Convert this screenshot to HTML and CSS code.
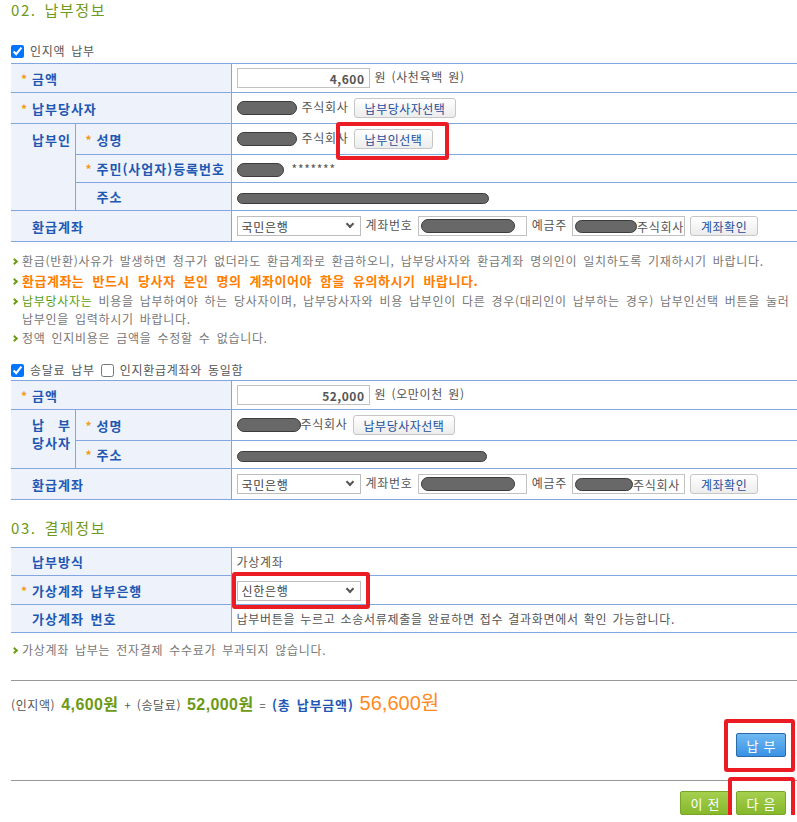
FILE: index.html
```html
<!DOCTYPE html>
<html lang="ko">
<head>
    <meta charset="UTF-8">
    <title>납부정보</title>
    <link rel="stylesheet" href="styles.css">
</head>
<body>
<div class="page">
    <h2 class="sec-title">02. 납부정보</h2>

    <div class="check-line">
        <label><input type="checkbox" checked> 인지액 납부</label>
    </div>

    <table class="form-table">
        <colgroup><col class="c-group"><col class="c-sub"><col></colgroup>
        <tr>
            <th colspan="2"><span class="req">금액</span></th>
            <td><input class="amount" type="text" value="4,600" readonly> 원 (사천육백 원)</td>
        </tr>
        <tr class="tall">
            <th colspan="2"><span class="req">납부당사자</span></th>
            <td><span class="mask w58"></span> 주식회사 <button class="btn-sm">납부당사자선택</button></td>
        </tr>
        <tr class="tall">
            <th rowspan="3" class="group">납부인</th>
            <th class="sub"><span class="req">성명</span></th>
            <td><span class="mask w58"></span> 주식회사 <span class="mark mark-btn"><button class="btn-sm">납부인선택</button></span></td>
        </tr>
        <tr class="short">
            <th class="sub"><span class="req">주민(사업자)등록번호</span></th>
            <td><span class="mask w45"></span> <span class="stars">*******</span></td>
        </tr>
        <tr class="short">
            <th class="sub"><span class="plain">주소</span></th>
            <td><span class="mask thin w250"></span></td>
        </tr>
        <tr class="tall">
            <th colspan="2"><span class="plain">환급계좌</span></th>
            <td>
                <span class="sel"><select><option>국민은행</option></select></span>
                계좌번호 <span class="field w109"><span class="mask w92"></span></span>
                예금주 <span class="field w113"><span class="mask w68 flat"></span>주식회사</span>
                <button class="btn-sm">계좌확인</button>
            </td>
        </tr>
    </table>

    <ul class="notes">
        <li>환급(반환)사유가 발생하면 청구가 없더라도 환급계좌로 환급하오니, 납부당사자와 환급계좌 명의인이 일치하도록 기재하시기 바랍니다.</li>
        <li class="warn">환급계좌는 반드시 당사자 본인 명의 계좌이어야 함을 유의하시기 바랍니다.</li>
        <li><span><b class="hl-green">납부당사자는</b> 비용을 납부하여야 하는 당사자이며, 납부당사자와 비용 납부인이 다른 경우(대리인이 납부하는 경우) 납부인선택 버튼을 눌러<br>납부인을 입력하시기 바랍니다.</span></li>
        <li>정액 인지비용은 금액을 수정할 수 없습니다.</li>
    </ul>

    <div class="check-line second">
        <label><input type="checkbox" checked> 송달료 납부</label>
        <label><input type="checkbox"> 인지환급계좌와 동일함</label>
    </div>

    <table class="form-table">
        <colgroup><col class="c-group"><col class="c-sub"><col></colgroup>
        <tr>
            <th colspan="2"><span class="req">금액</span></th>
            <td><input class="amount" type="text" value="52,000" readonly> 원 (오만이천 원)</td>
        </tr>
        <tr class="tall">
            <th rowspan="2" class="group"><div class="spread">납 부<br>당사자</div></th>
            <th class="sub"><span class="req">성명</span></th>
            <td><span class="mask w62"></span>주식회사 <button class="btn-sm">납부당사자선택</button></td>
        </tr>
        <tr class="short">
            <th class="sub"><span class="req">주소</span></th>
            <td><span class="mask thin w248"></span></td>
        </tr>
        <tr class="tall">
            <th colspan="2"><span class="plain">환급계좌</span></th>
            <td>
                <span class="sel"><select><option>국민은행</option></select></span>
                계좌번호 <span class="field w109"><span class="mask w92"></span></span>
                예금주 <span class="field w113"><span class="mask w56 flat"></span> 주식회사</span>
                <button class="btn-sm">계좌확인</button>
            </td>
        </tr>
    </table>

    <h2 class="sec-title third">03. 결제정보</h2>

    <table class="form-table">
        <colgroup><col class="c-group"><col class="c-sub"><col></colgroup>
        <tr class="short">
            <th colspan="2"><span class="plain">납부방식</span></th>
            <td>가상계좌</td>
        </tr>
        <tr>
            <th colspan="2"><span class="req">가상계좌 납부은행</span></th>
            <td><span class="mark mark-sel"><span class="sel"><select><option>신한은행</option></select></span></span></td>
        </tr>
        <tr class="short">
            <th colspan="2"><span class="plain">가상계좌 번호</span></th>
            <td>납부버튼을 누르고 소송서류제출을 완료하면 접수 결과화면에서 확인 가능합니다.</td>
        </tr>
    </table>

    <ul class="notes single">
        <li>가상계좌 납부는 전자결제 수수료가 부과되지 않습니다.</li>
    </ul>

    <div class="total">
        <span class="t-label">(인지액)</span>
        <b class="t-num">4,600원</b>
        <span class="t-op">+</span>
        <span class="t-label">(송달료)</span>
        <b class="t-num">52,000원</b>
        <span class="t-op">=</span>
        <b class="t-sum-label">(총 납부금액)</b>
        <span class="t-sum">56,600원</span>
    </div>

    <div class="pay-row">
        <span class="mark mark-pay"><button class="btn-big blue">납부</button></span>
    </div>

    <div class="nav-row">
        <button class="btn-big green">이전</button>
        <span class="mark mark-next"><button class="btn-big green">다음</button></span>
    </div>
</div>
</body>
</html>
```

FILE: styles.css
```css
body {
    margin: 0;
    background-color: #fff;
    font-family: "Noto Sans CJK KR", "Noto Sans", sans-serif;
    font-size: 12px;
    color: #555;
    letter-spacing: 0.7px;
    word-spacing: 2px;
}

.page {
    padding-left: 11px;
}

.sec-title {
    margin: 0;
    height: 20px;
    line-height: 20px;
    font-size: 15px;
    font-weight: normal;
    color: #6f981c;
    letter-spacing: 1.6px;
}

.sec-title.third {
    margin-top: 18px;
    margin-bottom: 9px;
}

.check-line {
    margin-top: 22px;
    margin-bottom: 3px;
    height: 18px;
    line-height: 18px;
    color: #555;
    display: flex;
    gap: 6px;
}

.check-line.second {
    margin-top: 14px;
    margin-bottom: 1px;
}

.check-line label {
    display: flex;
    align-items: center;
}

.check-line input {
    margin: 0 6px 0 0;
    width: 13px;
    height: 13px;
}

/* form tables */
.form-table {
    width: 786px;
    border-collapse: collapse;
    table-layout: fixed;
    border-top: 1px solid #82a7e0;
    border-bottom: 1px solid #82a7e0;
}

.c-group { width: 64px; }
.c-sub { width: 156px; }

.form-table th,
.form-table td {
    height: 28px;
    padding: 0;
    border: 1px solid #82a7e0;
    border-left: none;
    border-right: none;
    text-align: left;
    white-space: nowrap;
}

.form-table th {
    background-color: #eef3fb;
    border-right: 1px solid #82a7e0;
    color: #2157b3;
    font-size: 13px;
    font-weight: bold;
    letter-spacing: 1px;
}

.form-table tr.tall th,
.form-table tr.tall td {
    height: 30px;
}

.form-table tr.short th,
.form-table tr.short td {
    height: 27px;
}

.form-table td {
    padding-left: 5px;
    font-size: 12px;
    color: #555;
    word-spacing: 1px;
}

.form-table th.group {
    vertical-align: top;
    padding-top: 6px;
    padding-left: 21px;
    border-right: 1px solid #82a7e0;
}

.spread {
    width: 39px;
    line-height: 18px;
    text-align: justify;
    text-align-last: justify;
}

.req::before {
    content: "*";
    display: inline-block;
    width: 11px;
    color: #f39a14;
    font-weight: bold;
    font-size: 12px;
}

.form-table th .req { padding-left: 10px; }
.form-table th .plain { padding-left: 21px; }
.form-table th.sub .req { padding-left: 10px; }

/* redaction masks */
.mask {
    display: inline-block;
    height: 12px;
    vertical-align: middle;
    background-color: #686868;
    border: 1px solid #3c3c3c;
    border-radius: 7px;
}

.mask.thin { height: 9px; }
.mask.flat { height: 11px; }

.w45 { width: 45px; }
.w56 { width: 56px; }
.w58 { width: 58px; }
.w62 { width: 62px; }
.w68 { width: 68px; }
.w92 { width: 92px; }
.w248 { width: 248px; }
.w250 { width: 250px; }

.stars {
    margin-left: 3px;
    color: #555;
}

/* inputs */
.amount {
    width: 133px;
    height: 20px;
    box-sizing: border-box;
    border: 1px solid #c2c2c2;
    padding: 0 4px;
    text-align: right;
    font-family: inherit;
    font-size: 12px;
    font-weight: bold;
    color: #555;
    letter-spacing: 0.5px;
    vertical-align: middle;
}

.field {
    display: inline-flex;
    align-items: center;
    height: 20px;
    box-sizing: border-box;
    border: 1px solid #c2c2c2;
    padding-left: 2px;
    vertical-align: middle;
    overflow: hidden;
    white-space: nowrap;
    color: #555;
}

.w109 { width: 109px; }
.w113 { width: 113px; }

.sel {
    position: relative;
    display: inline-block;
    vertical-align: middle;
}

.sel select {
    -webkit-appearance: none;
    appearance: none;
    width: 124px;
    height: 20px;
    border: 1px solid #bdbdbd;
    border-radius: 0;
    padding: 0 0 0 4px;
    background-color: #fff;
    font-family: inherit;
    font-size: 12px;
    letter-spacing: 0.7px;
    color: #444;
    display: block;
}

.sel::after {
    content: "";
    position: absolute;
    right: 8px;
    top: 5px;
    width: 4px;
    height: 4px;
    border-right: 2px solid #555;
    border-bottom: 2px solid #555;
    transform: rotate(45deg);
    pointer-events: none;
}

/* small grey buttons */
.btn-sm {
    height: 20px;
    padding: 0 10px;
    border: 1px solid #c6c6c6;
    border-radius: 3px;
    background: linear-gradient(#ffffff, #ececec);
    font-family: inherit;
    font-size: 12px;
    letter-spacing: 0.5px;
    color: #1b4d9b;
    vertical-align: middle;
    cursor: pointer;
}

/* notes */
.notes {
    list-style: none;
    margin: 10px 0 0;
    padding: 0;
    color: #777;
    font-size: 12px;
}

.notes li {
    display: flex;
    line-height: 18px;
}

.notes li + li {
    margin-top: 1px;
}

.notes li::before {
    content: "";
    flex: none;
    width: 3px;
    height: 3px;
    margin: 7px 5px 0 1px;
    border-top: 2px solid #6d9d16;
    border-right: 2px solid #6d9d16;
    transform: rotate(45deg);
}

.notes li.warn {
    line-height: 20px;
    color: #ff7e00;
    font-weight: bold;
    font-size: 13px;
    letter-spacing: 0.5px;
    word-spacing: 4px;
}

.notes li.warn::before {
    margin-top: 8px;
}

.hl-green {
    color: #5a9d0f;
    font-weight: normal;
}

.notes.single {
    margin-top: 8px;
}

/* total */
.total {
    margin-top: 21px;
    width: 786px;
    border-top: 1px solid #999;
    padding-top: 10px;
    height: 24px;
    line-height: 24px;
    display: flex;
    align-items: baseline;
    gap: 6px;
    letter-spacing: 0.3px;
}

.t-label {
    color: #555;
    font-size: 12px;
    letter-spacing: 0.6px;
}

.t-op {
    font-size: 11px;
    color: #555;
}

.t-num {
    color: #6d9a15;
    font-family: "Liberation Sans", "Noto Sans CJK KR", sans-serif;
    font-size: 16px;
    letter-spacing: 0.4px;
}

.t-sum-label {
    color: #2157b3;
    font-size: 13px;
    letter-spacing: 0.8px;
}

.t-sum {
    color: #ff8a1c;
    font-family: "Liberation Sans", "Noto Sans CJK KR", sans-serif;
    font-size: 20px;
    letter-spacing: 0;
}

/* big buttons */
.pay-row {
    width: 775px;
    margin-top: 18px;
    padding-bottom: 23px;
    display: flex;
    justify-content: flex-end;
}

.nav-row {
    width: 786px;
    padding-right: 11px;
    box-sizing: border-box;
    border-top: 1px solid #999;
    padding-top: 10px;
    display: flex;
    justify-content: flex-end;
    gap: 6px;
}

.btn-big {
    width: 50px;
    height: 24px;
    padding: 0;
    border-radius: 2px;
    font-family: inherit;
    font-size: 13px;
    color: #fff;
    letter-spacing: 5px;
    text-indent: 5px;
    cursor: pointer;
}

.btn-big.blue {
    border: 1px solid #2a6aa8;
    background: linear-gradient(#6fb9f2, #3a92e4);
}

.btn-big.green {
    border: 1px solid #79a626;
    background: linear-gradient(#a5d04e, #86b82c);
}

/* red highlight boxes laid over the page */
.mark {
    position: relative;
    display: inline-block;
    vertical-align: middle;
}

.mark::after {
    content: "";
    position: absolute;
    border: 4px solid #ec1c24;
    border-radius: 3px;
    pointer-events: none;
}

.mark-btn::after { left: -18px; right: -16px; top: -7px; bottom: -11px; }
.mark-sel::after { left: -5px; right: -9px; top: -8px; bottom: -8px; }
.mark-pay::after { left: -12px; right: -9px; top: -14px; bottom: -15px; }
.mark-next::after { left: -8px; right: -9px; top: -14px; bottom: -10px; }
.mark > button { display: block; }
```
